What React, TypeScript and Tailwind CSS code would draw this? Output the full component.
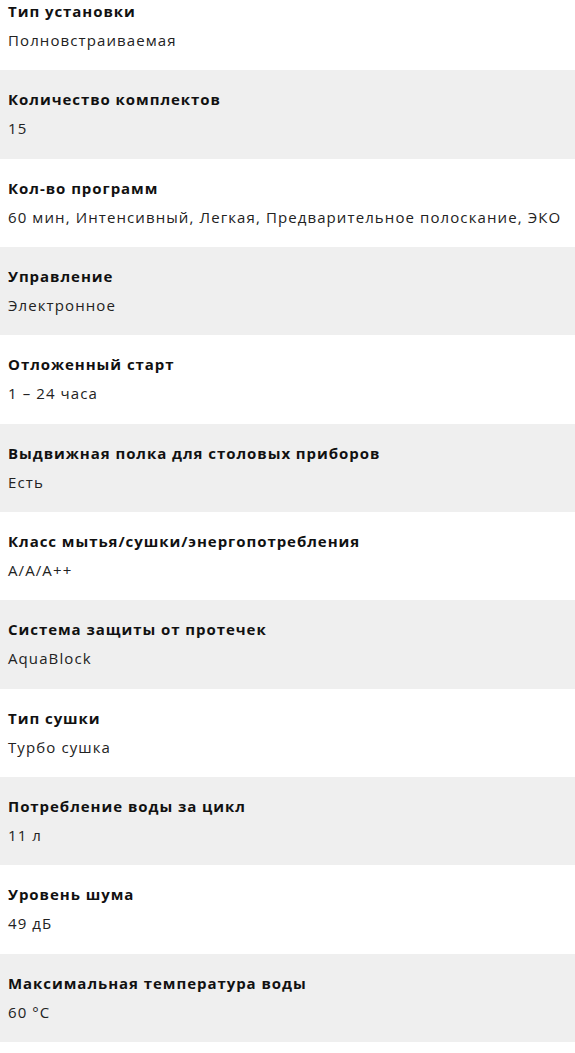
const specs: [string, string][] = [
  ["Тип установки", "Полновстраиваемая"],
  ["Количество комплектов", "15"],
  ["Кол-во программ", "60 мин, Интенсивный, Легкая, Предварительное полоскание, ЭКО"],
  ["Управление", "Электронное"],
  ["Отложенный старт", "1 – 24 часа"],
  ["Выдвижная полка для столовых приборов", "Есть"],
  ["Класс мытья/сушки/энергопотребления", "A/A/A++"],
  ["Система защиты от протечек", "AquaBlock"],
  ["Тип сушки", "Турбо сушка"],
  ["Потребление воды за цикл", "11 л"],
  ["Уровень шума", "49 дБ"],
  ["Максимальная температура воды", "60 °C"],
];

export default function App() {
  return (
    <div className="w-[575px] bg-white font-['Open_Sans',sans-serif] text-[#111]">
      {specs.map(([title, value], i) => (
        <div
          key={title}
          className={`flex flex-col gap-[5px] px-2 pb-[18.33px] ${i === 0 ? "pt-0 -mt-px" : "pt-[17px]"} ${
            i % 2 === 1 ? "bg-[#efefef]" : "bg-white"
          }`}
        >
          <div className="text-[15px] font-bold leading-[24px] tracking-[0.95px]">{title}</div>
          <div className="text-[15px] leading-[24px] tracking-[1.1px] text-[#222]">{value}</div>
        </div>
      ))}
    </div>
  );
}
